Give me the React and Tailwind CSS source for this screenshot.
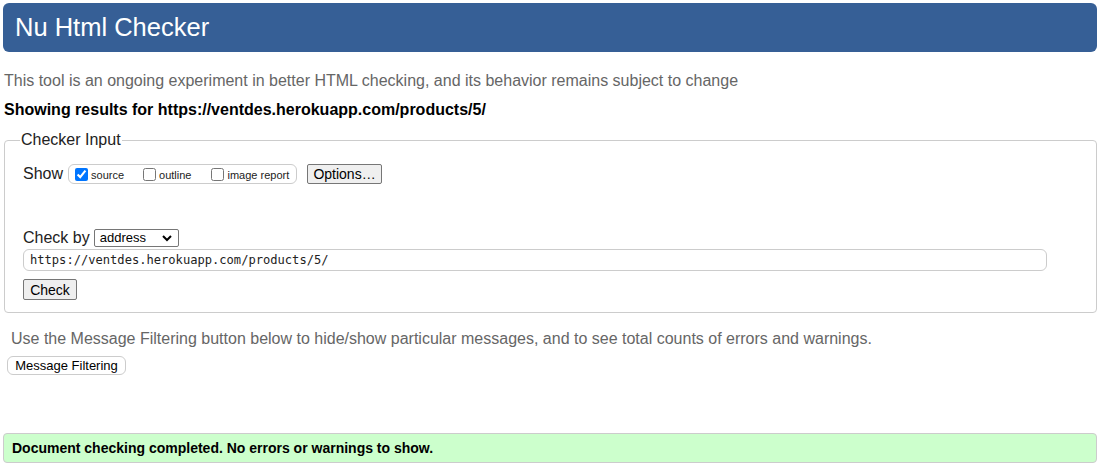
export default function App() {
  const url = 'https://ventdes.herokuapp.com/products/5/';

  return (
    <div className="w-[1104px] h-[468px] bg-white font-['Liberation_Sans',Arial,sans-serif] text-black overflow-hidden">
      {/* Header */}
      <div className="ml-[3px] mr-[7px] mt-[3px] h-[49px] rounded-[6px] bg-[#365f96] flex items-center pl-[12px]">
        <h1 className="text-[25.5px] text-white leading-none">Nu Html Checker</h1>
      </div>

      <p className="mt-[20px] ml-[4px] text-[16px] leading-[18px] text-[#666]">
        This tool is an ongoing experiment in better HTML checking, and its behavior remains subject to change
      </p>
      <p className="mt-[11px] ml-[4px] text-[16px] leading-[18px] font-bold">
        Showing results for {url}
      </p>

      {/* Checker Input */}
      <fieldset className="mt-[12px] ml-[4px] mr-[7px] border border-[#ccc] rounded-[4px] px-[18px] pt-[15px] pb-[12px]">
        <legend className="ml-[-3px] px-[1px] text-[16px] leading-[18px] text-[#222]">Checker Input</legend>

        <div className="flex items-center">
          <span className="text-[16px] leading-[18px] text-[#222] mr-[5px]">Show</span>
          <div className="h-[20px] w-[229px] border border-[#ccc] rounded-[6px] flex items-center pl-[6px] text-[11px] text-[#222]">
            <label className="flex items-end">
              <input type="checkbox" defaultChecked className="w-[13px] h-[13px] m-0 mr-[3px] accent-[#0075ff]" />
              <span className="leading-[12px]">source</span>
            </label>
            <label className="flex items-end ml-[19px]">
              <input type="checkbox" className="w-[13px] h-[13px] m-0 mr-[3px]" />
              <span className="leading-[12px]">outline</span>
            </label>
            <label className="flex items-end ml-[20px]">
              <input type="checkbox" className="w-[13px] h-[13px] m-0 mr-[3px]" />
              <span className="leading-[12px]">image report</span>
            </label>
          </div>
          <button className="ml-[10px] h-[20px] w-[75px] border border-[#767676] rounded-[2px] bg-[#efefef] text-[14px] leading-none">
            Options…
          </button>
        </div>

        <div className="mt-[45px] flex items-center">
          <span className="text-[16px] leading-[18px] text-[#222] mr-[4px]">Check by</span>
          <div className="relative h-[18px] w-[85px] border border-[#767676] rounded-[2px] bg-white text-[13px] flex items-center pl-[5px]">
            address
            <svg className="absolute right-[6px] top-[5px]" width="10" height="7" viewBox="0 0 10 7">
              <path d="M1 1 L5 5 L9 1" fill="none" stroke="#000" strokeWidth="2" />
            </svg>
          </div>
        </div>

        <div className="mt-[2px] h-[22px] w-[1024px] border border-[#ccc] rounded-[6px] flex items-center pl-[6px] font-['DejaVu_Sans_Mono',monospace] text-[12.1px] text-[#222]">
          {url}
        </div>

        <button className="mt-[8px] h-[21px] w-[54px] border border-[#767676] rounded-[2px] bg-[#efefef] text-[14px] leading-none block">
          Check
        </button>
      </fieldset>

      <p className="mt-[17px] ml-[11px] text-[16px] leading-[18px] text-[#666]">
        Use the Message Filtering button below to hide/show particular messages, and to see total counts of errors and warnings.
      </p>
      <button className="mt-[8px] ml-[7px] h-[19px] w-[119px] border border-[#ccc] rounded-[6px] bg-white text-[13px] leading-none block">
        Message Filtering
      </button>

      <div className="mt-[58px] ml-[3px] mr-[7px] h-[30px] border border-[#ccc] rounded-[4px] bg-[#ccffcc] flex items-center pl-[8px] text-[14px] font-bold">
        Document checking completed. No errors or warnings to show.
      </div>
    </div>
  );
}
